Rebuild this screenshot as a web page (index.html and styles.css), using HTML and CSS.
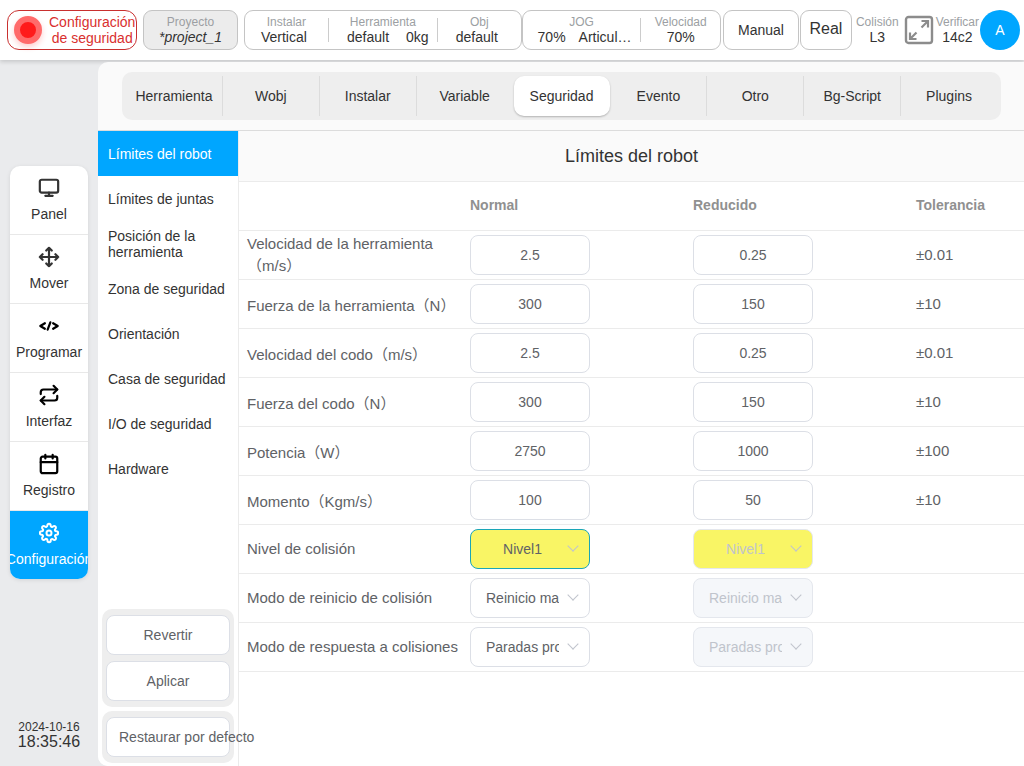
FILE: index.html
```html
<!DOCTYPE html>
<html lang="es">
<head>
  <meta charset="UTF-8" />
  <meta name="viewport" content="width=device-width, initial-scale=1.0" />
  <title>Límites del robot</title>
  <link rel="stylesheet" href="styles.css">
</head>
<body>
  <header class="topbar">
    <button class="safety-btn" type="button">
      <span class="safety-dot"></span>
      <span>Configuración<br>de seguridad</span>
    </button>
    <div class="box project">
      <div class="metric">
        <span class="label">Proyecto</span>
        <span class="value"><i>*project_1</i></span>
      </div>
    </div>
    <div class="box group setup">
      <div class="metric">
        <span class="label">Instalar</span>
        <span class="value short">Vertical</span>
      </div>
      <span class="divider"></span>
      <div class="metric wide">
        <span class="label">Herramienta</span>
        <span class="value tool"><span>default</span><span>0kg</span></span>
      </div>
      <span class="divider"></span>
      <div class="metric">
        <span class="label">Obj</span>
        <span class="value short">default</span>
      </div>
    </div>
    <div class="box group jog">
      <div class="metric wider">
        <span class="label">JOG</span>
        <span class="value pair"><span>70%</span><span>Articul…</span></span>
      </div>
      <span class="divider"></span>
      <div class="metric">
        <span class="label">Velocidad</span>
        <span class="value">70%</span>
      </div>
    </div>
    <button class="box mode-btn" type="button">Manual</button>
    <button class="box real-btn" type="button">Real</button>
    <div class="metric plain">
      <span class="label">Colisión</span>
      <span class="value">L3</span>
    </div>
    <button class="expand-btn" type="button" aria-label="Pantalla completa">
      <svg width="30" height="30" viewBox="0 0 30 30" fill="none" stroke="#8c8c8c" stroke-width="2">
        <rect x="2" y="2" width="26" height="26" rx="2.500" stroke-width="2.400"/>
        <path d="M17.500 6h6.500v6.500M24 6l-6.500 6.500M12.500 24H6v-6.500M6 24l6.500-6.500" stroke-width="2.200"/>
      </svg>
    </button>
    <div class="metric plain">
      <span class="label">Verificar</span>
      <span class="value">14c2</span>
    </div>
    <button class="avatar" type="button">A</button>
  </header>

  <div class="layout">
    <aside class="sidebar">
      <nav class="main-nav">
        <a href="#">
          <svg viewBox="0 0 24 24"><rect x="2" y="3" width="20" height="14" rx="2"/><path d="M8 20.500h8M12 17v3"/></svg>
          <span>Panel</span>
        </a>
        <a href="#">
          <svg viewBox="0 0 24 24"><path d="M5 9l-3 3 3 3M9 5l3-3 3 3M15 19l-3 3-3-3M19 9l3 3-3 3M2 12h20M12 2v20"/></svg>
          <span>Mover</span>
        </a>
        <a href="#">
          <svg class="black" viewBox="0 0 24 24"><path d="M7.500 9L2.500 12l5 3M16.500 9l5 3-5 3M13.500 8l-3 8"/></svg>
          <span>Programar</span>
        </a>
        <a href="#">
          <svg class="black" viewBox="0 0 24 24"><path d="M17 2l4 4-4 4"/><path d="M3 11V9a3 3 0 0 1 3-3h15M7 22l-4-4 4-4"/><path d="M21 13v2a3 3 0 0 1-3 3H3"/></svg>
          <span>Interfaz</span>
        </a>
        <a href="#">
          <svg class="black" viewBox="0 0 24 24"><rect x="3" y="4" width="18" height="18" rx="2"/><path d="M3 10h18M8 2v4M16 2v4"/></svg>
          <span>Registro</span>
        </a>
        <a href="#" class="active">
          <svg viewBox="0 0 24 24"><circle cx="12" cy="12" r="3"/><path d="M19.400 15a1.650 1.650 0 0 0 .33 1.820l.06.06a2 2 0 1 1-2.830 2.830l-.06-.06a1.650 1.650 0 0 0-2.800 1.180V21a2 2 0 0 1-4 0v-.09a1.650 1.650 0 0 0-2.910-1.260l-.06.06a2 2 0 1 1-2.830-2.830l.06-.06a1.650 1.650 0 0 0-1.180-2.800H3a2 2 0 0 1 0-4h.09a1.650 1.650 0 0 0 1.260-2.910l-.06-.06a2 2 0 1 1 2.830-2.830l.06.06a1.650 1.650 0 0 0 2.820-1.190V3a2 2 0 0 1 4 0v.09a1.650 1.650 0 0 0 2.820 1.190l.06-.06a2 2 0 1 1 2.830 2.830l-.06.06a1.650 1.650 0 0 0 1.190 2.910H21a2 2 0 0 1 0 4h-.09a1.650 1.650 0 0 0-1.510.98z"/></svg>
          <span>Configuración</span>
        </a>
      </nav>
      <div class="clock">
        <div class="date">2024-10-16</div>
        <div class="time">18:35:46</div>
      </div>
    </aside>

    <main class="main">
      <div class="tabs-bar">
        <nav class="tabs">
          <a href="#">Herramienta</a>
          <a href="#">Wobj</a>
          <a href="#">Instalar</a>
          <a href="#" class="before-active">Variable</a>
          <a href="#" class="active">Seguridad</a>
          <a href="#">Evento</a>
          <a href="#">Otro</a>
          <a href="#">Bg-Script</a>
          <a href="#">Plugins</a>
        </nav>
      </div>
      <div class="content">
        <div class="submenu">
          <nav class="submenu-list">
            <a href="#" class="active">Límites del robot</a>
            <a href="#">Límites de juntas</a>
            <a href="#">Posición de la herramienta</a>
            <a href="#">Zona de seguridad</a>
            <a href="#">Orientación</a>
            <a href="#">Casa de seguridad</a>
            <a href="#">I/O de seguridad</a>
            <a href="#">Hardware</a>
          </nav>
          <div class="actions">
            <button type="button">Revertir</button>
            <button type="button">Aplicar</button>
          </div>
          <div class="actions">
            <button type="button" class="restore">Restaurar por defecto</button>
          </div>
        </div>

        <section class="panel">
          <h1>Límites del robot</h1>
          <table class="limits">
            <colgroup>
              <col class="col"><col class="col"><col class="col"><col>
            </colgroup>
            <thead>
              <tr><th></th><th>Normal</th><th>Reducido</th><th>Tolerancia</th></tr>
            </thead>
            <tbody>
              <tr>
                <td id="l1">Velocidad de la herramienta（m/s）</td>
                <td><input type="text" value="2.5" aria-labelledby="l1"></td>
                <td><input type="text" value="0.25" aria-labelledby="l1"></td>
                <td>±0.01</td>
              </tr>
              <tr>
                <td id="l2" class="unit">Fuerza de la herramienta（N）</td>
                <td><input type="text" value="300" aria-labelledby="l2"></td>
                <td><input type="text" value="150" aria-labelledby="l2"></td>
                <td>±10</td>
              </tr>
              <tr>
                <td id="l3" class="unit">Velocidad del codo（m/s）</td>
                <td><input type="text" value="2.5" aria-labelledby="l3"></td>
                <td><input type="text" value="0.25" aria-labelledby="l3"></td>
                <td>±0.01</td>
              </tr>
              <tr>
                <td id="l4" class="unit">Fuerza del codo（N）</td>
                <td><input type="text" value="300" aria-labelledby="l4"></td>
                <td><input type="text" value="150" aria-labelledby="l4"></td>
                <td>±10</td>
              </tr>
              <tr>
                <td id="l5" class="unit">Potencia（W）</td>
                <td><input type="text" value="2750" aria-labelledby="l5"></td>
                <td><input type="text" value="1000" aria-labelledby="l5"></td>
                <td>±100</td>
              </tr>
              <tr>
                <td id="l6" class="unit">Momento（Kgm/s）</td>
                <td><input type="text" value="100" aria-labelledby="l6"></td>
                <td><input type="text" value="50" aria-labelledby="l6"></td>
                <td>±10</td>
              </tr>
              <tr>
                <td id="l7">Nivel de colisión</td>
                <td><div class="select level focus"><select aria-labelledby="l7"><option>Nivel1</option></select></div></td>
                <td><div class="select level"><select aria-labelledby="l7" disabled><option>Nivel1</option></select></div></td>
                <td></td>
              </tr>
              <tr>
                <td id="l8">Modo de reinicio de colisión</td>
                <td><div class="select"><select aria-labelledby="l8"><option>Reinicio manual</option></select></div></td>
                <td><div class="select"><select aria-labelledby="l8" disabled><option>Reinicio manual</option></select></div></td>
                <td></td>
              </tr>
              <tr>
                <td id="l9">Modo de respuesta a colisiones</td>
                <td><div class="select"><select aria-labelledby="l9"><option>Paradas protectoras</option></select></div></td>
                <td><div class="select"><select aria-labelledby="l9" disabled><option>Paradas protectoras</option></select></div></td>
                <td></td>
              </tr>
            </tbody>
          </table>
        </section>
      </div>
    </main>
  </div>
</body>
</html>
```
FILE: styles.css
```css
* {
  box-sizing: border-box;
}
body {
  margin: 0;
  min-height: 100vh;
  display: flex;
  flex-direction: column;
  font-family: "Liberation Sans", Arial, "Noto Sans CJK SC", sans-serif;
  font-size: 14px;
  color: #333;
  background-color: #eaebed;
}
a {
  color: inherit;
  text-decoration: none;
}
button,
input,
select {
  font-family: inherit;
  font-size: 14px;
  margin: 0;
}
button {
  cursor: pointer;
}

/* top bar */
.topbar {
  height: 60px;
  flex: none;
  display: flex;
  align-items: center;
  padding: 0 4px 0 7px;
  background-color: #fff;
  box-shadow: 0 2px 4px rgba(0, 0, 0, 0.15);
}
.box {
  height: 40px;
  flex: none;
  display: flex;
  align-items: center;
  justify-content: center;
  padding: 0;
  border: 1px solid #c4c4c4;
  border-radius: 9px;
  background-color: #fff;
  color: #333;
}
.safety-btn {
  width: 130px;
  height: 40px;
  flex: none;
  display: flex;
  align-items: center;
  gap: 7px;
  padding: 0 0 0 6px;
  border: 1px solid #c9302f;
  border-radius: 12px;
  background-color: #fff;
  color: #d9302f;
  line-height: 16px;
  white-space: nowrap;
}
.safety-dot {
  width: 28px;
  height: 28px;
  flex: none;
  border: 6px solid #ff6a6a;
  border-radius: 50%;
  background-color: #ff1a1a;
  box-shadow: 0 3px 6px rgba(255, 0, 0, 0.2);
}
.project {
  width: 95px;
  margin: 0 6px;
  background-color: #ececec;
}
.setup {
  flex: 278 1 0;
}
.jog {
  flex: 199 1 0;
}
.metric {
  flex: 84 1 0;
  display: flex;
  flex-direction: column;
  align-items: center;
  white-space: nowrap;
}
.metric.wide {
  flex-grow: 110;
}
.metric.wider {
  flex-grow: 126;
}
.metric.plain {
  flex: none;
}
.label {
  font-size: 12px;
  line-height: 14px;
  color: #9c9fa3;
}
.value {
  display: flex;
  line-height: 16px;
}
.short {
  padding-right: 5px;
}
.tool {
  gap: 17px;
  padding-left: 10px;
}
.pair {
  gap: 13px;
  padding-left: 6px;
}
.divider {
  width: 1px;
  height: 24px;
  background-color: #ccc;
}
.mode-btn {
  width: 76px;
  margin: 0 1px 0 2px;
}
.real-btn {
  width: 52px;
  margin-right: 4px;
  padding-bottom: 3px;
  font-size: 16px;
}
.expand-btn {
  width: 30px;
  height: 30px;
  margin: 0 2px 0 5px;
  padding: 0;
  border: none;
  background: none;
}
.expand-btn svg {
  display: block;
}
.avatar {
  width: 40px;
  height: 40px;
  flex: none;
  margin-left: 1px;
  padding: 0;
  border: none;
  border-radius: 50%;
  background-color: #00a6ff;
  color: #fff;
}

/* sidebar */
.layout {
  flex: 1;
  display: flex;
  padding-top: 2px;
}
.sidebar {
  width: 98px;
  flex: none;
  display: flex;
  flex-direction: column;
  padding: 104px 10px 16px;
}
.main-nav {
  overflow: hidden;
  border-radius: 10px;
  background-color: #fff;
  box-shadow: 0 1px 4px rgba(0, 0, 0, 0.1);
}
.main-nav a {
  height: 69px;
  display: flex;
  flex-direction: column;
  align-items: center;
  gap: 5px;
  padding-top: 11px;
  border-bottom: 1px solid #e8e8e8;
  line-height: 20px;
}
.main-nav svg {
  width: 22px;
  height: 22px;
  flex: none;
  fill: none;
  stroke: #333;
  stroke-width: 2.4;
  stroke-linecap: round;
  stroke-linejoin: round;
}
.main-nav svg.black {
  stroke: #000;
}
.main-nav a.active {
  height: 68px;
  border-bottom: none;
  background-color: #00a6ff;
  color: #fff;
}
.main-nav a.active svg {
  width: 20px;
  stroke: #fff;
}
.clock {
  margin-top: auto;
  text-align: center;
}
.date {
  font-size: 12px;
  line-height: 14px;
}
.time {
  font-size: 16px;
  line-height: 16px;
}

/* main area */
.main {
  position: relative;
  flex: 1;
  min-width: 0;
  display: flex;
  flex-direction: column;
  overflow: hidden;
  border-radius: 10px 0 0 10px;
  background-color: #fafafa;
}
.tabs-bar {
  padding: 10px 23px 10px 24px;
  border-bottom: 1px solid #dcdcdc;
}
.tabs {
  display: flex;
  padding: 4px 3px 4px 4px;
  border-radius: 10px;
  background-color: #eee;
}
.tabs a {
  flex: 1 1 0;
  height: 40px;
  line-height: 40px;
  text-align: center;
  border-right: 1px solid #dcdcdc;
}
.tabs a.active {
  border-color: transparent;
  border-radius: 10px;
  background-color: #fff;
  box-shadow: 0 1px 2px rgba(0, 0, 0, 0.25);
}
.tabs a.before-active,
.tabs a:last-child {
  border-color: transparent;
}
.content {
  flex: 1;
  display: flex;
}
.submenu {
  width: 141px;
  flex: none;
  display: flex;
  flex-direction: column;
  gap: 4px;
  padding-bottom: 3px;
  border-right: 1px solid #ebebeb;
  background-color: #fff;
}
.submenu-list {
  flex: 1;
}
.submenu-list a {
  height: 45px;
  display: flex;
  align-items: center;
  padding: 0 10px;
  line-height: 16px;
}
.submenu-list a.active {
  background-color: #00a6ff;
  color: #fff;
}
.actions {
  display: flex;
  flex-direction: column;
  gap: 6px;
  margin: 0 4px;
  padding: 6px 4px;
  border-radius: 10px;
  background-color: #eee;
}
.actions button {
  height: 40px;
  padding: 0 12px;
  border: 1px solid #dcdfe6;
  border-radius: 8px;
  background-color: #fff;
  color: #606266;
  white-space: nowrap;
}
.actions .restore {
  position: relative;
  z-index: 1;
  text-align: left;
}

/* limits table */
.panel {
  flex: 1;
  min-width: 0;
  background-color: #fff;
}
.panel h1 {
  margin: 0;
  height: 51px;
  line-height: 50px;
  font-size: 18px;
  font-weight: normal;
  text-align: center;
  border-bottom: 1px solid #ebebeb;
  background-color: #fafafa;
}
.limits {
  width: 100%;
  table-layout: fixed;
  border-collapse: separate;
  border-spacing: 0;
  font-size: 15px;
  line-height: 22px;
  color: #606266;
}
.col {
  width: 223px;
}
.limits th,
.limits td {
  height: 49px;
  padding: 0 0 0 8px;
  text-align: left;
  vertical-align: middle;
  border-bottom: 1px solid #ebebeb;
}
.limits th {
  padding-bottom: 2px;
  font-size: 14px;
  color: #909090;
}
.limits .unit {
  padding-top: 3px;
}
.limits input,
.select {
  display: block;
  width: 120px;
  height: 40px;
}
.limits input,
.select select {
  padding: 0 15px;
  border: 1px solid #dcdfe6;
  border-radius: 8px;
  background-color: #fff;
  color: #606266;
  text-align: center;
  outline: none;
}
.select {
  position: relative;
}
.select select {
  width: 100%;
  height: 100%;
  padding-right: 30px;
  appearance: none;
}
.select select:disabled {
  background-color: #f5f7fa;
  border-color: #e4e7ed;
  color: #c0c4cc;
  opacity: 1;
}
.select::after {
  content: "";
  box-sizing: border-box;
  position: absolute;
  top: 13px;
  right: 13px;
  width: 8px;
  height: 8px;
  border-right: 1px solid #c0c4cc;
  border-bottom: 1px solid #c0c4cc;
  transform: rotate(45deg);
  pointer-events: none;
}
.select.level select,
.select.level select:disabled {
  background-color: #f9f565;
}
.select.focus select {
  border-color: #1aa6b8;
}
```
